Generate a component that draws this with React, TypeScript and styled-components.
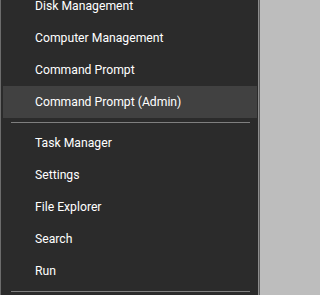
import React from "react";
import styled, { createGlobalStyle } from "styled-components";

const Global = createGlobalStyle`
  html, body { margin: 0; padding: 0; background: #bdbdbd; overflow: hidden; }
  body { width: 262px; height: 295px; }
  #root { height: 295px; }
`;

const Frame = styled.div`
  display: flex;
  height: 295px;
  width: 262px;
  overflow: hidden;
  background: #bdbdbd;
`;

const Menu = styled.nav`
  width: 257px;
  height: 295px;
  background: #2b2b2b;
  border-left: 1px solid #6c6c6c;
  border-right: 1px solid #8d8d8d;
  overflow: hidden;
  flex-shrink: 0;
`;

const Edge = styled.div`
  width: 1px;
  background: #5e5e5e;
  flex-shrink: 0;
`;

const List = styled.ul`
  list-style: none;
  margin: -10px 0 0 0;
  padding: 0;
  display: flex;
  flex-direction: column;
`;

const Item = styled.li<{ $active?: boolean }>`
  height: 32px;
  margin: 0 1px 0 2px;
  padding-left: 32px;
  display: flex;
  align-items: center;
  background: ${(p) => (p.$active ? "#414141" : "transparent")};
  color: #ffffff;
  font-family: Roboto, "Noto Sans", sans-serif;
  font-size: 12.2px;
  white-space: nowrap;
  cursor: default;
`;

const Separator = styled.li`
  height: 9px;
  display: flex;
  align-items: center;
  padding: 0 8px 0 10px;
  &::after {
    content: "";
    flex: 1;
    height: 1px;
    background: #7f7f7f;
  }
`;

const groups: { label: string; active?: boolean }[][] = [
  [
    { label: "Disk Management" },
    { label: "Computer Management" },
    { label: "Command Prompt" },
    { label: "Command Prompt (Admin)", active: true },
  ],
  [
    { label: "Task Manager" },
    { label: "Settings" },
    { label: "File Explorer" },
    { label: "Search" },
    { label: "Run" },
  ],
];

export default function App() {
  return (
    <>
      <Global />
      <Frame>
        <Menu>
          <List>
            {groups.map((g, gi) => (
              <React.Fragment key={gi}>
                {g.map((it) => (
                  <Item key={it.label} $active={it.active}>
                    {it.label}
                  </Item>
                ))}
                <Separator />
              </React.Fragment>
            ))}
          </List>
        </Menu>
        <Edge />
      </Frame>
    </>
  );
}
